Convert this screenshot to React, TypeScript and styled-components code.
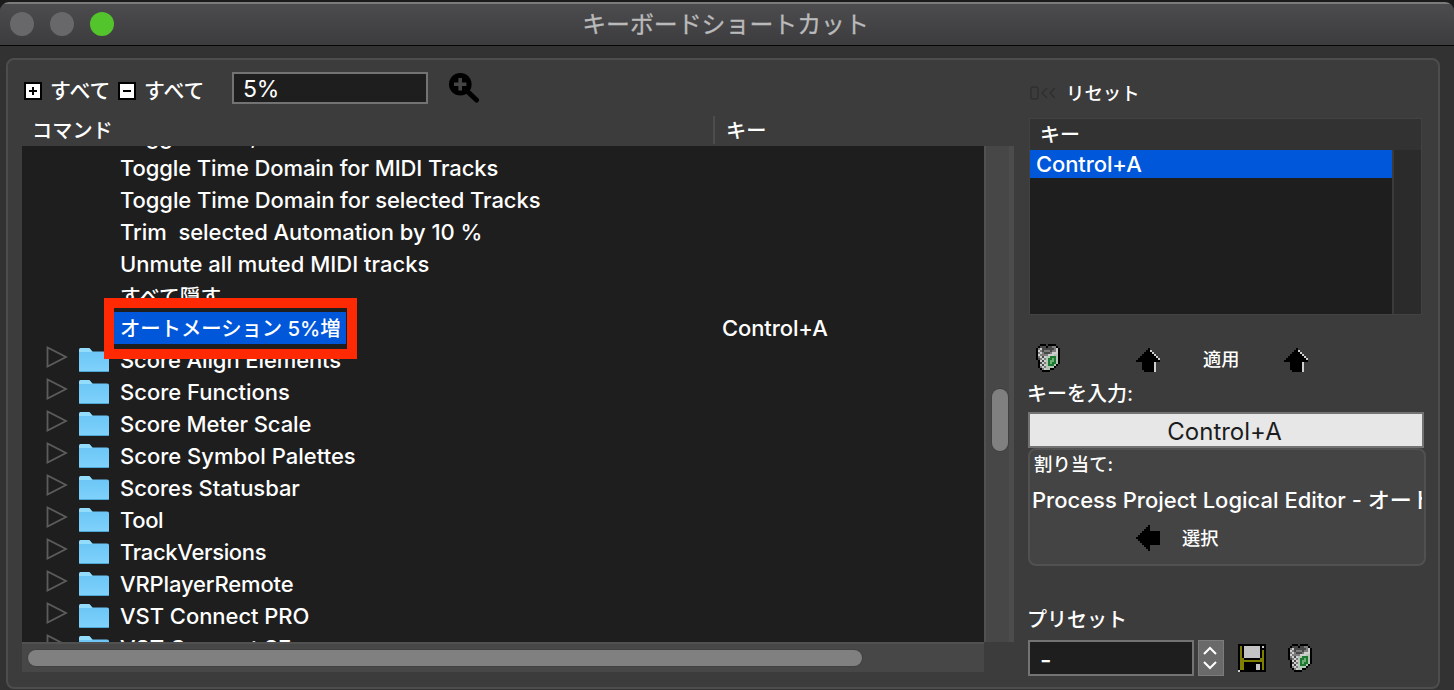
import React from "react";
import styled, { createGlobalStyle } from "styled-components";

const Global = createGlobalStyle`
  * { box-sizing: border-box; }
  html, body { margin: 0; padding: 0; background: #323232; overflow: hidden; }
  body { font-family: Inter, "Noto Sans CJK JP", sans-serif; color: #fff; }
  svg { display: block; flex: none; }
`;

const Desktop = styled.div`
  width: 1454px;
  height: 690px;
  padding-top: 2px;
  background: #1b1b1b;
  overflow: hidden;
`;

const Window = styled.div`
  height: 688px;
  display: flex;
  flex-direction: column;
  background: #323232;
  border-radius: 9px 9px 0 0;
  overflow: hidden;
`;

const TitleBar = styled.header`
  height: 44px;
  flex: none;
  display: grid;
  grid-template-columns: 200px 1fr 203px;
  align-items: center;
  background: linear-gradient(#4c4c4e, #3c3c3e);
  border-top: 2px solid #7b7b7b;
  border-bottom: 1px solid #060606;
`;

const Lights = styled.div`
  display: flex;
  gap: 16px;
  padding-left: 10px;
  margin-top: -2px;
`;

const Light = styled.span<{ $on?: boolean }>`
  width: 24px;
  height: 24px;
  border-radius: 50%;
  background: ${(p) => (p.$on ? "#54c42c" : "#68686a")};
`;

const Title = styled.h1`
  margin: 0;
  text-align: center;
  font-size: 23.9px;
  font-weight: 400;
  line-height: 40px;
  color: #bababb;
  -webkit-text-stroke: 0.3px #bababb;
`;

const Panel = styled.main`
  margin: 12px 14px 0 6px;
  height: 631px;
  flex: none;
  display: flex;
  background: #3c3c3c;
  border: 2px solid #4d4d4d;
  border-radius: 8px;
`;

const Browser = styled.section`
  width: 992px;
  margin-left: 14px;
  flex: none;
  display: flex;
  flex-direction: column;
`;

const Toolbar = styled.div`
  height: 56px;
  display: flex;
  align-items: center;
  padding: 2px 0 0 2px;
`;

const Expander = styled.button`
  display: flex;
  align-items: center;
  gap: 8px;
  width: 94px;
  padding: 3px 0 0;
  border: 0;
  background: none;
  color: #fff;
  font: 500 20.9px/28px Inter, "Noto Sans CJK JP", sans-serif;
  white-space: nowrap;
`;

const SearchField = styled.div`
  width: 196px;
  height: 32px;
  margin: -3px 20px 0 20px;
  padding-left: 9px;
  border: 2px solid #737373;
  background: #1e1e1e;
  font-size: 23px;
  line-height: 31px;
  letter-spacing: -0.3px;
`;

const SearchButton = styled.div`
  padding-bottom: 3px;
`;

const ColumnHeads = styled.div`
  height: 30px;
  display: flex;
  font-size: 20.2px;
  font-weight: 500;
  line-height: 30px;
`;

const CommandHead = styled.div`
  width: 693px;
  height: 28px;
  padding-left: 10px;
  border-right: 2px solid #4d4d4d;
`;

const KeyHead = styled.div`
  padding-left: 11px;
`;

const ListArea = styled.div`
  display: grid;
  grid-template: 496px 30px / 962px 30px;
`;

const List = styled.div`
  background: #1e1e1e;
  overflow: hidden;
`;

const Rows = styled.ul`
  margin: -26px 0 0;
  padding: 0;
  list-style: none;
`;

const Row = styled.li`
  height: 32px;
  display: grid;
  grid-template-columns: 24px 33px 35px 608px 1fr;
  align-items: center;
  font-size: 22px;
  font-weight: 500;
  line-height: 32px;
  white-space: pre;
`;

const Caption = styled.span<{ $spacing?: number; $size?: number }>`
  justify-self: start;
  padding-left: 6px;
  letter-spacing: ${(p) => p.$spacing ?? -0.08}px;
  font-size: ${(p) => p.$size ?? 22}px;
  line-height: ${(p) => (p.$size ? 34 : 32)}px;
`;

const Chosen = styled(Caption)`
  position: relative;
  width: 232px;
  height: 32px;
  background: #0057d9;
`;

const Callout = styled.span`
  position: absolute;
  inset: -14px -11px -15px -10px;
  border: 10px solid #ff2a04;
  z-index: 2;
`;

const RowKey = styled.span`
  letter-spacing: -0.1px;
`;

const VScroll = styled.div`
  background: #474747;
  border-left: 2px solid #515151;
  border-right: 5px solid #4c4c4c;
  padding: 243px 0 0 6px;
`;

const HScroll = styled.div`
  background: #474747;
  border-top: 2px solid #515151;
  padding: 6px 0 0 6px;
`;

const Thumb = styled.div<{ $w: number; $h: number }>`
  width: ${(p) => p.$w}px;
  height: ${(p) => p.$h}px;
  border-radius: 9px;
  background: #808080;
  box-shadow: 0 0 0 1px #404040;
`;

const Side = styled.aside`
  width: 400px;
  margin-left: 14px;
  display: flex;
  flex-direction: column;
`;

const Reset = styled.div`
  height: 58px;
  padding: 18px 0 0 1px;
  display: flex;
  gap: 11px;
  font-size: 18.4px;
  font-weight: 500;
  line-height: 30px;
`;

const Faint = styled.span`
  display: flex;
  align-items: center;
  width: 26px;
  height: 30px;
`;

const KeyTable = styled.div`
  width: 393px;
  height: 197px;
  margin-left: 1px;
  border: 1px solid #424242;
  background: #1e1e1e;
`;

const KeyTableHead = styled.div`
  height: 31px;
  padding-left: 10px;
  background: #323232;
  font-size: 20px;
  font-weight: 500;
  line-height: 32px;
`;

const KeyTableBody = styled.div`
  display: grid;
  grid-template-columns: 362px 1fr;
  height: 164px;
`;

const KeyItem = styled.div`
  height: 28px;
  padding-left: 6px;
  background: #0057d9;
  font-size: 22px;
  font-weight: 500;
  line-height: 28px;
  letter-spacing: -0.1px;
`;

const Gutter = styled.div`
  background: #2b2b2b;
  border-left: 2px solid #3b3b3b;
`;

const Actions = styled.div`
  height: 63px;
  display: flex;
  align-items: center;
  padding: 22px 0 0 8px;
  font-size: 18.2px;
  font-weight: 500;
  line-height: 24px;
`;

const ActionIcon = styled.span<{ $before?: number }>`
  margin-left: ${(p) => p.$before ?? 0}px;
  padding-top: 4px;
`;

const ActionText = styled.span<{ $before: number; $after: number }>`
  width: 37px;
  padding-top: 3px;
  margin: 0 ${(p) => p.$after}px 0 ${(p) => p.$before}px;
`;

const FieldLabel = styled.div<{ $top?: number; $h: number }>`
  height: ${(p) => p.$h}px;
  margin: ${(p) => p.$top ?? 0}px 0 0 -1px;
  padding-top: 2px;
  font-size: 20px;
  font-weight: 500;
  line-height: 28px;
`;

const KeyInput = styled.div`
  width: 396px;
  height: 36px;
  padding-right: 3px;
  border: 2px solid #737373;
  background: #e7e7e7;
  color: #1c1c1c;
  text-align: center;
  font-size: 24px;
  line-height: 35px;
`;

const Assigned = styled.div`
  width: 398px;
  height: 118px;
  padding: 0 2px;
  border: 2px solid #515151;
  border-radius: 8px;
  background: #444;
  overflow: hidden;
`;

const AssignedTitle = styled.div`
  height: 33px;
  padding-left: 2px;
  font-size: 18.4px;
  font-weight: 500;
  line-height: 28px;
`;

const AssignedValue = styled.div`
  height: 34px;
  width: 390px;
  overflow: hidden;
  white-space: nowrap;
  font-size: 22px;
  font-weight: 500;
  line-height: 34px;
`;

const SelectRow = styled.div`
  display: flex;
  align-items: center;
  padding: 8px 0 0 104px;
  font-size: 18.2px;
  font-weight: 500;
  line-height: 24px;
`;

const SelectText = styled.span`
  margin-left: 22px;
`;

const Preset = styled.div`
  display: flex;
  align-items: center;
`;

const PresetValue = styled.div`
  width: 166px;
  height: 36px;
  padding-left: 10px;
  border: 2px solid #737373;
  background: #1e1e1e;
  font-size: 25px;
  font-weight: 500;
  line-height: 36px;
`;

const Stepper = styled.div`
  width: 26px;
  height: 36px;
  margin: 0 14px 0 4px;
  border: 1px solid #7c7c7c;
  background: #6a6a6a;
`;

const PresetTrash = styled.div`
  margin-left: 22px;
`;

const BoxGlyph = ({ plus }: { plus?: boolean }) => (
  <svg width="18" height="18" viewBox="0 0 18 18">
    <path d="M0 0h18v18H0z" fill="#000" />
    <path d="M2 2h14v14H2z" fill="#fff" />
    <path d={plus ? "M5 9h8M9 5v8" : "M5 9h8"} stroke="#000" strokeWidth="2" />
  </svg>
);

const Magnifier = () => (
  <svg width="32" height="32" viewBox="0 0 32 32">
    <circle cx="12.3" cy="12.3" r="11.3" fill="#000" />
    <path d="M18.5 18.5L28.5 28" stroke="#000" strokeWidth="5" strokeLinecap="round" />
    <path d="M6 12.2h12.4M12.2 6v12.4" stroke="#444" strokeWidth="3.6" />
  </svg>
);

const Arrow = () => (
  <svg width="24" height="32" viewBox="0 0 24 32">
    <path d="M1.5 3.500v19L20 13z" fill="none" stroke="#5c5c5c" strokeWidth="1.8" />
  </svg>
);

const Folder = () => (
  <svg width="30" height="32" viewBox="0 0 30 32">
    <defs>
      <linearGradient id="folder" x2="0" y2="1">
        <stop offset="0" stopColor="#69c4f5" />
        <stop offset="1" stopColor="#7fd2fb" />
      </linearGradient>
    </defs>
    <path d="M0 6.5Q0 4 2 4h7.500q1.500 0 2.500 2l1.500 1.500H28Q30 7.500 30 9V26.500Q30 28 28.500 28h-27Q0 28 0 26.500z" fill="url(#folder)" />
    <path d="M0 8V6q0-2 2-2h7.500q1.500 0 2.500 2l1.500 2z" fill="#94dcfb" />
    <path d="M.5 27.500h29" stroke="#4da6d8" />
  </svg>
);

const inks: Record<string, string> = {
  K: "#000000",
  D: "#484848",
  G: "#7c7c7c",
  W: "#cfcfcf",
  L: "#b4c6b5",
  N: "#1c7a30",
  M: "#6fae79",
  Y: "#808000",
  S: "#c4c4c4",
};

const PixelIcon = ({ rows }: { rows: string[] }) => (
  <svg
    width={rows[0].length * 2}
    height={rows.length * 2}
    viewBox={`0 0 ${rows[0].length} ${rows.length}`}
    shapeRendering="crispEdges"
  >
    {rows.flatMap((row, y) =>
      [...row].map((c, x) =>
        inks[c] ? <rect key={`${x}-${y}`} x={x} y={y} width="1" height="1" fill={inks[c]} /> : null
      )
    )}
  </svg>
);

const trash = [
  "..KKK.KKKK..",
  ".KDDDKDDGGK.",
  "KGWDDDDDDGWK",
  "KWGDGGGDGGWK",
  "KGWGDDDGWWWK",
  "KWGGGGWWWLLK",
  "KGWDWLLNNNLK",
  "KDGWGLNNMNLK",
  ".KWDWLNMMNLK",
  ".KDWGLNMNNLK",
  ".KWDWLNNNLK.",
  ".KGWGLLLLK..",
  "..KGWLLKK...",
  "...KKKK.....",
];

const upArrow = [
  "......K.....",
  ".....KKW....",
  "....KKKKW...",
  "...KKKKKKW..",
  "..KKKKKKKKW.",
  ".KKKKKKKKKKW",
  "KKKKKKKKKKKK",
  "...KKKKKKW..",
  "...KKKKKKW..",
  "...KKKKKKW..",
  "...KKKKKKW..",
  "....KKKKKW..",
];

const leftArrow = [
  "......K.....",
  ".....KK.....",
  "....KKK.....",
  "...KKKKKKKKK",
  "..KKKKKKKKKK",
  ".KKKKKKKKKKK",
  "KKKKKKKKKKKK",
  ".KKKKKKKKKKK",
  "..KKKKKKKKKK",
  "...KKKKKKKKK",
  "....KKK.....",
  ".....KK.....",
  "......K.....",
];

const floppy = [
  "KKKKKKKKKKKKKK",
  "KYKSSSSSSSSKWK",
  "KYKSSSSSSSSKKK",
  "KYKSSSSSSSSKYK",
  "KYKSSSSSSSSKYK",
  "KYKSSSSSSSSKYK",
  "KYKSSSSSSSSKYK",
  "KYYKKKKKKKKYYK",
  "KYYYYYYYYYYYYK",
  "KYYKKKKKKKKKYK",
  "KYYKKKKKKSSKYK",
  "KYYKKKKKKSSKYK",
  "KYYKKKKKKSSKYK",
  "WKKKKKKKKKKKKK",
];

const commands: { text: string; folder?: boolean; key?: string; spacing?: number; size?: number }[] = [
  { text: "Toggle Mute," },
  { text: "Toggle Time Domain for MIDI Tracks", spacing: -0.1 },
  { text: "Toggle Time Domain for selected Tracks", spacing: -0.08 },
  { text: "Trim  selected Automation by 10 %", spacing: -0.05 },
  { text: "Unmute all muted MIDI tracks", spacing: 0 },
  { text: "すべて隠す", size: 20.7, spacing: 0 },
  { text: "オートメーション 5%増", key: "Control+A", size: 20.4 },
  { text: "Score Align Elements", folder: true, spacing: -0.1 },
  { text: "Score Functions", folder: true, spacing: 0 },
  { text: "Score Meter Scale", folder: true },
  { text: "Score Symbol Palettes", folder: true, spacing: 0 },
  { text: "Scores Statusbar", folder: true, spacing: -0.05 },
  { text: "Tool", folder: true, spacing: -0.4 },
  { text: "TrackVersions", folder: true, spacing: -0.34 },
  { text: "VRPlayerRemote", folder: true, spacing: -0.15 },
  { text: "VST Connect PRO", folder: true, spacing: -0.05 },
  { text: "VST Connect SE", folder: true },
];

const CommandRow = ({ item }: { item: (typeof commands)[number] }) => (
  <Row>
    <span />
    <span>{item.folder && <Arrow />}</span>
    <span>{item.folder && <Folder />}</span>
    {item.key ? (
      <Chosen $size={item.size}>
        {item.text}
        <Callout />
      </Chosen>
    ) : (
      <Caption $size={item.size} $spacing={item.spacing}>{item.text}</Caption>
    )}
    <RowKey>{item.key}</RowKey>
  </Row>
);

export default function App() {
  return (
    <Desktop>
      <Global />
      <Window>
        <TitleBar>
          <Lights>
            <Light />
            <Light />
            <Light $on />
          </Lights>
          <Title>キーボードショートカット</Title>
        </TitleBar>
        <Panel>
          <Browser>
            <Toolbar>
              <Expander><BoxGlyph plus />すべて</Expander>
              <Expander><BoxGlyph />すべて</Expander>
              <SearchField>5%</SearchField>
              <SearchButton><Magnifier /></SearchButton>
            </Toolbar>
            <ColumnHeads>
              <CommandHead>コマンド</CommandHead>
              <KeyHead>キー</KeyHead>
            </ColumnHeads>
            <ListArea>
              <List>
                <Rows>
                  {commands.map((c) => <CommandRow key={c.text} item={c} />)}
                </Rows>
              </List>
              <VScroll><Thumb $w={16} $h={62} /></VScroll>
              <HScroll><Thumb $w={834} $h={16} /></HScroll>
            </ListArea>
          </Browser>
          <Side>
            <Reset>
              <Faint>
                <svg width="26" height="14" viewBox="0 0 26 14">
                  <path d="M2 3q0-2 2-2h3q2 0 2 2v8q0 2-2 2H4q-2 0-2-2zM18 2l-5 5 5 5M26 2l-5 5 5 5" fill="none" stroke="#2f2f2f" strokeWidth="1.4" />
                </svg>
              </Faint>
              リセット
            </Reset>
            <KeyTable>
              <KeyTableHead>キー</KeyTableHead>
              <KeyTableBody>
                <KeyItem>Control+A</KeyItem>
                <Gutter />
              </KeyTableBody>
            </KeyTable>
            <Actions>
              <PixelIcon rows={trash} />
              <ActionIcon $before={76}><PixelIcon rows={upArrow} /></ActionIcon>
              <ActionText $before={43} $after={44}>適用</ActionText>
              <ActionIcon><PixelIcon rows={upArrow} /></ActionIcon>
            </Actions>
            <FieldLabel $h={34}>キーを入力:</FieldLabel>
            <KeyInput>Control+A</KeyInput>
            <Assigned>
              <AssignedTitle>割り当て:</AssignedTitle>
              <AssignedValue>Process Project Logical Editor - オートメーション 5%増</AssignedValue>
              <SelectRow>
                <PixelIcon rows={leftArrow} />
                <SelectText>選択</SelectText>
              </SelectRow>
            </Assigned>
            <FieldLabel $h={36} $top={38}>プリセット</FieldLabel>
            <Preset>
              <PresetValue>-</PresetValue>
              <Stepper>
                <svg width="24" height="34" viewBox="0 0 24 34">
                  <path d="M5 13l6-6 6 6M5 21l6 6 6-6" fill="none" stroke="#fff" strokeWidth="2" />
                </svg>
              </Stepper>
              <PixelIcon rows={floppy} />
              <PresetTrash><PixelIcon rows={trash} /></PresetTrash>
            </Preset>
          </Side>
        </Panel>
      </Window>
    </Desktop>
  );
}
